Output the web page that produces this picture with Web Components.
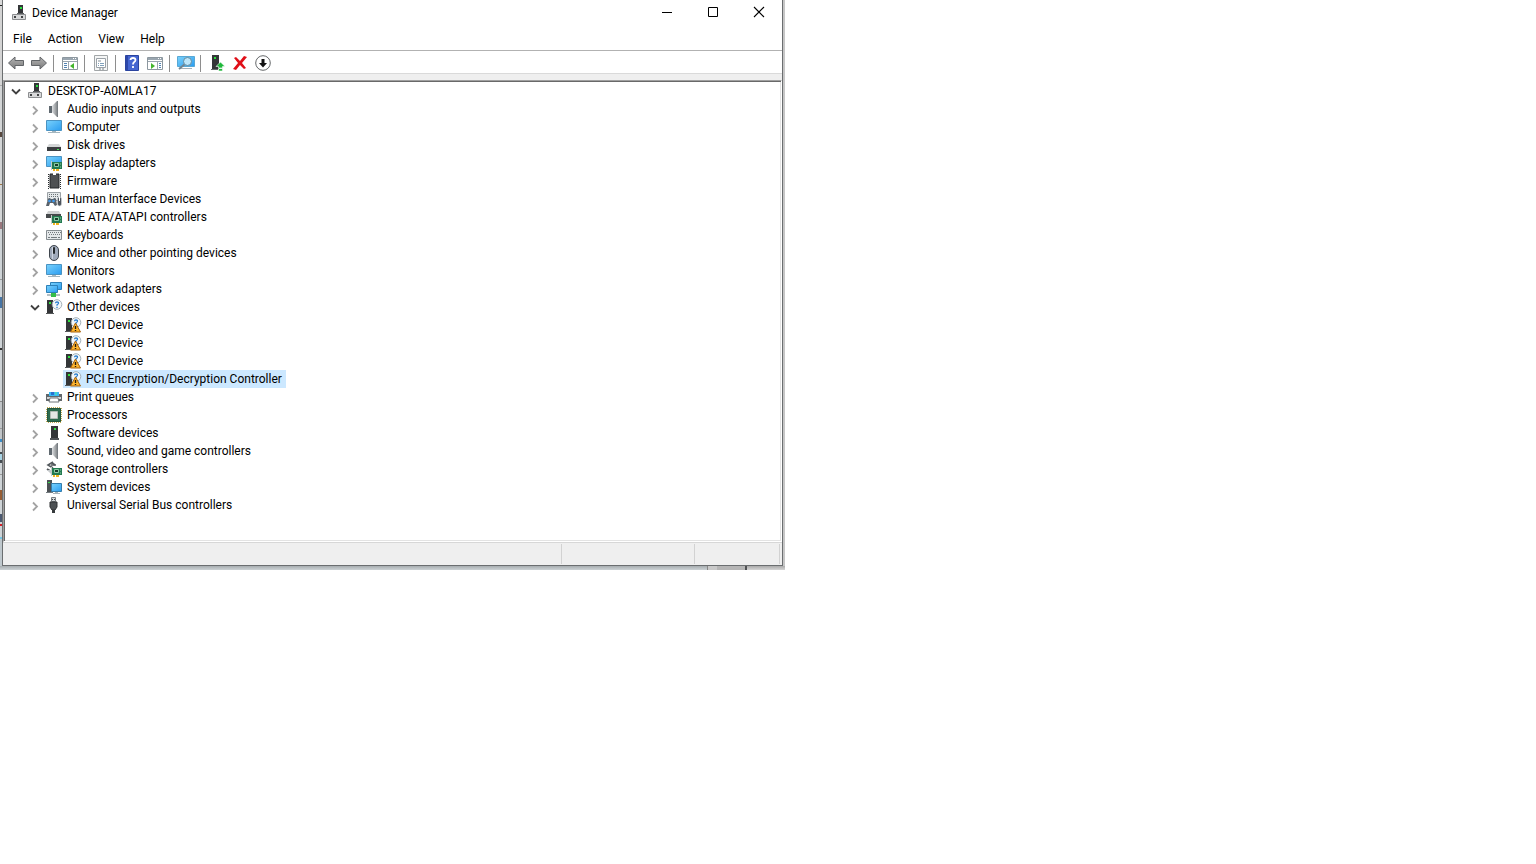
<!DOCTYPE html>
<html lang="en">
<head>
<meta charset="utf-8">
<title>Device Manager</title>
<style>
body { margin: 0; background: #fff; font: 12px/18px Roboto, "Open Sans", sans-serif; color: #000; }
</style>
</head>
<body>
<dm-desktop>
  <dm-window heading="Device Manager">
    <dm-menubar slot="bars"></dm-menubar>
    <dm-toolbar slot="bars"></dm-toolbar>
    <dm-tree>
      <dm-node icon="pc" label="DESKTOP-A0MLA17" open>
        <dm-node icon="speaker" label="Audio inputs and outputs" closed></dm-node>
        <dm-node icon="monitor" label="Computer" closed></dm-node>
        <dm-node icon="disk" label="Disk drives" closed></dm-node>
        <dm-node icon="display" label="Display adapters" closed></dm-node>
        <dm-node icon="firmware" label="Firmware" closed></dm-node>
        <dm-node icon="hid" label="Human Interface Devices" closed></dm-node>
        <dm-node icon="ide" label="IDE ATA/ATAPI controllers" closed></dm-node>
        <dm-node icon="keyboard" label="Keyboards" closed></dm-node>
        <dm-node icon="mouse" label="Mice and other pointing devices" closed></dm-node>
        <dm-node icon="monitor" label="Monitors" closed></dm-node>
        <dm-node icon="network" label="Network adapters" closed></dm-node>
        <dm-node icon="other" label="Other devices" open>
          <dm-node icon="unknown" label="PCI Device"></dm-node>
          <dm-node icon="unknown" label="PCI Device"></dm-node>
          <dm-node icon="unknown" label="PCI Device"></dm-node>
          <dm-node icon="unknown" label="PCI Encryption/Decryption Controller" selected></dm-node>
        </dm-node>
        <dm-node icon="printer" label="Print queues" closed></dm-node>
        <dm-node icon="cpu" label="Processors" closed></dm-node>
        <dm-node icon="tower" label="Software devices" closed></dm-node>
        <dm-node icon="speaker" label="Sound, video and game controllers" closed></dm-node>
        <dm-node icon="storage" label="Storage controllers" closed></dm-node>
        <dm-node icon="system" label="System devices" closed></dm-node>
        <dm-node icon="usb" label="Universal Serial Bus controllers" closed></dm-node>
      </dm-node>
    </dm-tree>
    <dm-statusbar slot="status"></dm-statusbar>
  </dm-window>
</dm-desktop>

<script>
const screenGradient = '<defs><linearGradient id="s" x1="0" y1="0" x2="1" y2="1"><stop offset="0" stop-color="#7ad2fc"/><stop offset="1" stop-color="#2a9cf0"/></linearGradient></defs>';
const metalGradient = '<defs><linearGradient id="m"><stop offset="0" stop-color="#dfe1e3"/><stop offset="1" stop-color="#85898c"/></linearGradient></defs>';
const arrowGradient = '<defs><linearGradient id="a" x1="0" y1="0" x2="0" y2="1"><stop offset="0" stop-color="#b5b5b5"/><stop offset="1" stop-color="#7b7b7b"/></linearGradient></defs>';
const card = '<path d="M6 7h10v7H6z" fill="#237a50"/><path d="M5.500 6v9" stroke="#c4cbc7"/><path d="M8.500 8.500h4v3h-4z" fill="#183d2b" stroke="#8cc9a5"/><path d="M14 9h1M14 12h1" stroke="#8cc9a5"/><path d="M7 14h2v2H7zM10 14h3v2h-3z" fill="#f0b41e"/>';
const tower = '<path d="M1 1h6v13H1z" fill="#343638"/><path d="M0 14h8v1H0z" fill="#55585a"/><path d="M3 3h2v2H3z" fill="#31e33f"/>';
const question = '<circle cx="11" cy="5.500" r="4.800" fill="#f4f7f9" stroke="#9ba8b1" stroke-width=".9"/><path d="M9.500 4.300q.1-1.500 1.500-1.500 1.600.1 1.500 1.500-.1.800-1.500 1.500v1M11 7.800v1.200" fill="none" stroke="#2178cd" stroke-width="1.200"/>';
const pcBoard = '<path d="M1.500 9.500h13v5h-13z" fill="#d8d9da" stroke="#8c8e90"/><path d="M3 11h2v2H3zM10 11h2v2h-2z" fill="#414345"/><path d="M7 0h5v9H7z" fill="#343638"/><path d="M6 8h7v1H6z" fill="#5b5d60"/><path d="M9 2h2v2H9z" fill="#29df3e"/>';
const icons = {
  pc: pcBoard,
  speaker: metalGradient + '<path d="M3 5h3v7H3z" fill="#606970"/><path d="M6 5l5-5v16l-5-5z" fill="url(#m)"/><path d="M11 0h1v16h-1z" fill="#777d82"/>',
  monitor: screenGradient + '<path d="M.5 1.500h15v10H.5z" fill="url(#s)" stroke="#4a93c2"/><path d="M6 12h4v1h4v1H2v-1h4z" fill="#a4b6bf"/>',
  disk: '<path d="M3 7h10l2 3H1z" fill="#d4d6d7"/><path d="M1 10h14v4H1z" fill="#3b3e41"/><path d="M11 12h2v1h-2z" fill="#44df55"/>',
  display: screenGradient + '<path d="M.5 1.500h15v10H.5z" fill="url(#s)" stroke="#4a93c2"/>' + card,
  firmware: '<path d="M4 1h9v14H4z" fill="#4e5153" stroke="#25282a"/><path d="M2.500 1v15M14.500 1v15" stroke="#292c2e" stroke-dasharray="1 1"/><path d="M7 0h3v2H7z" fill="#fff"/>',
  hid: '<path d="M1.500 1.500h13v8h-13z" fill="#e4e8ea" stroke="#9ba1a5"/><path d="M3 3.500h10M3 5.500h10" stroke="#6b7175" stroke-dasharray="1 1"/><path d="M2 8q1-2 3 0h2q2-2 3 0l1 6-2 1-2-3H4l-1 3H0z" fill="#59626b"/><circle cx="3.500" cy="10" r="1.300" fill="#3c99ee"/><circle cx="7.500" cy="10" r="1.300" fill="#3c99ee"/><rect x="11.500" y="6" width="4" height="9" rx="2" fill="#4b525b" stroke="#d3d7da" stroke-width=".6"/><path d="M13.500 6v4" stroke="#fff"/>',
  ide: '<path d="M2 2h11l2 4H0z" fill="#cfd1d2"/><path d="M0 5h15v4H0z" fill="#45494b"/>' + card,
  keyboard: '<path d="M.5 3.500h15v9H.5z" fill="#e5e8ea" stroke="#868d91"/><path d="M2 5.500h13M3 7.500h12" stroke="#737a7e" stroke-dasharray="1 1"/><path d="M2 10.500h2m1 0h6m1 0h2" stroke="#737a7e"/>',
  mouse: '<rect x="3.500" y=".5" width="9" height="15" rx="4.500" fill="#a0aabb" stroke="#3f454d"/><path d="M6 2h1v12H6z" fill="#cdd4df"/><rect x="7" y="2" width="2" height="7" rx="1" fill="#24282c"/>',
  network: screenGradient + '<path d="M4.500 1.500h11v7h-11z" fill="url(#s)" stroke="#2d80b8"/><path d="M.5 4.500h11v7H.5z" fill="url(#s)" stroke="#2d80b8"/><path d="M5 12h4v1h5v2H1v-2h4z" fill="#b4bfc3"/><path d="M5 12h5v4H5z" fill="#35bd4a"/>',
  other: tower + question,
  unknown: tower + question + '<path d="M10.500 6L15.500 15H5.500z" fill="#ffb52c" stroke="#a5610f" stroke-linejoin="round"/><path d="M10.500 9v3M10.500 13v1" stroke="#231b10" stroke-width="1.400"/>',
  printer: '<path d="M3 3h10v4H3z" fill="#39b8f3"/><path d="M5 3h3v3H5z" fill="#2a70cf"/><path d="M9 3h2v3H9z" fill="#48d6c6"/><path d="M0 5h3v2h10V5h3v7H0z" fill="#62676b"/><path d="M1 8h14v2H1z" fill="#d3d6d8"/><path d="M4 9h8l1 4H3z" fill="#fff" stroke="#71777a"/>',
  cpu: '<path d="M1 1h14v14H1z" fill="none" stroke="#c5ac55" stroke-width="2" stroke-dasharray="1 1"/><path d="M1.500 1.500h13v13h-13z" fill="#2c6b4e" stroke="#235640"/><path d="M4.500 4.500h7v7h-7z" fill="#e4e7e5" stroke="#b1bbb5"/>',
  tower: '<path d="M5 1h7v12H5z" fill="#333638"/><path d="M4 13h9v2H4z" fill="#505457"/><path d="M8 3h2v2H8z" fill="#30dd43"/>',
  storage: '<path d="M7 1L2 4l5 3M5 4h5" fill="none" stroke="#53585c" stroke-width="1.600"/><path d="M6 2l3 2M1 8l5 3" stroke="#53585c" stroke-width="2"/><path d="M1 9l4 4h2V9z" fill="#c6cacc"/>' + card,
  system: screenGradient + '<path d="M1 1h5v12H1z" fill="#4c5154"/><path d="M2 3h2v1H2z" fill="#38dc4c"/><path d="M0 13h7v1H0z" fill="#767d81"/><path d="M5.500 4.500h10v8h-10z" fill="url(#s)" stroke="#357dab"/><path d="M9 13h3v1h2v1H7v-1h2z" fill="#a8b3b9"/>',
  usb: '<path d="M5.500.5h4v4h-4z" fill="#d4d7d9" stroke="#777c80"/><path d="M6 2h1v1H6zM8 2h1v1H8z" fill="#424649"/><path d="M4 5h7v5l-2 3H6l-2-3z" fill="#4d5154" stroke="#303335"/><path d="M6 13h3v3H6z" fill="#363a3c"/>',
  back: arrowGradient + '<path d="M.5 8L7 2v3.500h8.500v5H7V14z" fill="url(#a)" stroke="#626568"/>',
  forward: arrowGradient + '<path d="M15.500 8L9 2v3.500H.5v5H9V14z" fill="url(#a)" stroke="#626568"/>',
  hidetree: '<path d="M.5 2.500h15v12H.5z" fill="#fff" stroke="#8c979f"/><path d="M1 3h14v2H1z" fill="#9aa6b0"/><path d="M11 3.500h1m1 0h1" stroke="#fff"/><path d="M1 6.500h14M6.500 7v7" stroke="#9ba6b0"/><path d="M2 8.500h3M2 10.500h3M2 12.500h3" stroke="#5283b3"/><path d="M12 8v6l-4-3z" fill="#43b52d"/>',
  props: '<path d="M1.500.5h13v15h-13z" fill="#f5f6f6" stroke="#a2a6a8"/><path d="M3.500 3.500h9v9h-9z" fill="#fff" stroke="#9ba2a8"/><path d="M5 5h3v2H5z" fill="#c0c6cb"/><path d="M5 8.500h1m1 0h4M5 10.500h1m1 0h4" stroke="#7fa1bb"/><path d="M6 14h2m1 0h2" stroke="#778188"/>',
  help: '<path d="M1.500.5h13v15h-13z" fill="#4566d1" stroke="#2b449f"/><path d="M2 1h2v14H2z" fill="#2d48aa"/><path d="M6.500 5q0-2 2.500-2t2.500 2q0 1.200-1.500 2.200Q9 8 9 9.500M9 11v2" fill="none" stroke="#fff" stroke-width="1.800"/>',
  actionpane: '<path d="M.5 2.500h15v12H.5z" fill="#fff" stroke="#8c979f"/><path d="M1 3h14v2H1z" fill="#9aa6b0"/><path d="M11 3.500h1m1 0h1" stroke="#fff"/><path d="M1 6.500h14M10.500 7v7" stroke="#9ba6b0"/><path d="M12 8.500h2M12 10.500h2M12 12.500h2" stroke="#5283b3"/><path d="M4 8v6l4-3z" fill="#43b52d"/>',
  scan: screenGradient + '<path d="M-.5 1.500h17v10h-17z" fill="url(#s)" stroke="#59a8d4"/><path d="M2 13h12v1H2z" fill="#a8b2b8"/><path d="M7 9l-6 5" stroke="#718591" stroke-width="2"/><circle cx="9.500" cy="6.500" r="4" fill="#bce6fa" stroke="#668b9d"/>',
  update: '<path d="M3 0h7v14H3z" fill="#343638"/><path d="M2 14h7v1H2z" fill="#65696b"/><path d="M5 2h2v2H5z" fill="#2fdf41"/><path d="M11.500 7l4.500 4.500h-2.500V13h-4v-1.500H7zM9.500 13.500h4V16h-4z" fill="#20b83b" stroke="#fff" stroke-width=".6"/>',
  remove: '<path d="M2 3l2-1 4 4 4-5 3 1-5 6 4 5-2 1-4-4-4 5-3-1 5-6z" fill="#e00f18"/>',
  disable: '<circle cx="8" cy="8" r="7.300" fill="#fff" stroke="#66696b"/><path d="M6.500 4h3v4H12l-4 4.500L4 8h2.500z" fill="#111"/>',
  minimize: '<path d="M3 8.500h10" stroke="#000"/>',
  maximize: '<path d="M3.500 3.500h9v9h-9z" fill="none" stroke="#000"/>',
  close: '<path d="M3 3l10 10M13 3L3 13" stroke="#000" stroke-width="1.100"/>',
  expanded: '<path d="M4 6.500l4 4 4-4" fill="none" stroke="#404040" stroke-width="1.800"/>',
  collapsed: '<path d="M6 5.500l4 4-4 4" fill="none" stroke="#a3a3a3" stroke-width="1.800"/>'
};

function define(name, render) {
  customElements.define(name, class extends HTMLElement {
    connectedCallback() {
      if (!this.shadowRoot) this.attachShadow({ mode: 'open' }).innerHTML = render(this);
    }
  });
}

define('dm-icon', el => `<style>
  :host { display: block; width: 16px; height: 16px; flex: none; }
  svg { display: block; width: 16px; height: 16px; overflow: visible; }
</style><svg viewBox="0 0 16 16" aria-hidden="true">${icons[el.getAttribute('name')]}</svg>`);

define('dm-desktop', () => `<style>
  :host { display: grid; grid-template-columns: 2px minmax(0, 1fr) 2px; width: calc(50% + 17px);
    background: linear-gradient(90deg, #c5cbce, #d0d2d4 60%, #c6c6c6); }
  .edge { background: linear-gradient(#dadada 5px, #222 5px 6px, #d4d4d4 6px 85px, #aaa 85px 86px,
    #d3d5d6 86px 132px, #58483e 132px 137px, #d3d5d6 137px 184px, #9b7546 184px 185px,
    #d3d5d6 185px 222px, #99777d 222px 229px, #ced3d6 229px 279px, #999 279px 280px,
    #ced3d6 280px 297px, #4775a5 297px 308px, #ced3d6 308px 348px, #333 348px 350px,
    #ced3d6 350px 401px, #888 401px 402px, #c0c4c7 402px 428px, #999 428px 429px,
    #c0c4c7 429px 439px, #3c8dc7 439px 442px, #d0d5d7 442px 452px, #464d52 452px 454px,
    #a8d3e4 454px 460px, #464d52 460px 463px, #ced3d6 463px 474px, #999 474px 475px,
    #ced3d6 475px 490px, #965d35 490px 500px, #ced3d6 500px 514px, #4b5971 514px 522px,
    #ced3d6 522px 524px, #d42129 524px 526px, #ced3d6 526px 537px, #75c6e3 537px 539px, #bfc8cd 539px); }
  .below { grid-column: 1 / -1; height: 4px; display: grid; grid-template-columns: 1fr 10px 28px 2px 38px;
    background: linear-gradient(#a7adb0, #ccd2d5); }
  .below i:nth-child(2) { border-left: 1px solid #888; background: #c9c9c9; }
  .below i:nth-child(3) { background: #b5b5b5; }
  .below i:nth-child(4) { background: #505254; }
  .below i:nth-child(5) { background: linear-gradient(#aaa, #d5d5d5); }
</style><div class="edge"></div><slot></slot><div></div><div class="below"><i></i><i></i><i></i><i></i><i></i></div>`);

define('dm-window', el => `<style>
  :host { display: block; min-width: 0; border: solid #6b6e70; border-width: 0 1px 1px; background: #efefef; }
  header { display: flex; align-items: center; height: 26px; padding-left: 8px; background: #fff; }
  h1 { flex: 1; margin: 0 0 0 5px; font: inherit; }
  button { display: grid; place-items: center; width: 46px; height: 24px; padding: 0; border: 0; background: none; align-self: flex-start; }
  main { padding-top: 6px; }
</style>
<header><dm-icon name="pc"></dm-icon><h1>${el.getAttribute('heading')}</h1>
<button aria-label="Minimize"><dm-icon name="minimize"></dm-icon></button>
<button aria-label="Maximize"><dm-icon name="maximize"></dm-icon></button>
<button aria-label="Close"><dm-icon name="close"></dm-icon></button></header>
<slot name="bars"></slot><main><slot></slot></main><slot name="status"></slot>`);

define('dm-menubar', () => `<style>
  :host { display: flex; height: 22px; padding: 2px 0 0 2px; background: #fff; border-bottom: 1px solid #b2b2b2; }
  button { padding: 0 8px; border: 0; background: none; font: inherit; color: inherit; }
</style><button>File</button><button>Action</button><button>View</button><button>Help</button>`);

const tools = [['back', 'Back'], ['forward', 'Forward'], 0, ['hidetree', 'Show/Hide Console Tree'], 0, ['props', 'Properties'], 0,
  ['help', 'Help'], ['actionpane', 'Show/Hide Action Pane'], 0, ['scan', 'Scan for hardware changes'], 0,
  ['update', 'Update driver'], ['remove', 'Uninstall device'], ['disable', 'Disable device']];
define('dm-toolbar', () => `<style>
  :host { display: flex; align-items: center; height: 22px; padding: 0 0 0 1px; background: #fff; border-bottom: 1px solid #dadada; }
  button { display: grid; place-items: center; width: 23px; height: 22px; padding: 2px 0 0; border: 0; background: none; }
  i { width: 1px; height: 17px; margin: 2px 4px 0 3px; background: #8e8e8e; }
</style>${tools.map(t => t ? `<button aria-label="${t[1]}"><dm-icon name="${t[0]}"></dm-icon></button>` : '<i></i>').join('')}`);

define('dm-tree', () => `<style>
  :host { display: block; padding: 1px 0 27px 4px; background: #fff; border: 1px solid;
    border-color: #a0a0a0 #fff #fff #a0a0a0; box-shadow: inset 1px 1px #696969, inset -1px -1px #e3e3e3; }
</style><div role="tree"><slot></slot></div>`);

define('dm-node', el => {
  const open = el.hasAttribute('open'), parent = open || el.hasAttribute('closed');
  return `<style>
  :host { display: block; }
  .row { display: flex; height: 18px; align-items: center; }
  .toggle { width: 16px; height: 16px; padding: 0; border: 0; background: none; flex: none; }
  .item { display: flex; align-items: center; gap: 5px; height: 18px; margin-left: 1px; padding: 0 4px 0 2px; white-space: nowrap; }
  .selected { background: #cce8ff; }
  .children { padding-left: 19px; }
</style><div role="treeitem" aria-selected="${el.hasAttribute('selected')}"${parent ? ` aria-expanded="${open}"` : ''}>
<div class="row">${parent ? `<button class="toggle" aria-label="${open ? 'Collapse' : 'Expand'}"><dm-icon name="${open ? 'expanded' : 'collapsed'}"></dm-icon></button>` : '<span class="toggle"></span>'}
<span class="item${el.hasAttribute('selected') ? ' selected' : ''}"><dm-icon name="${el.getAttribute('icon')}"></dm-icon><span>${el.getAttribute('label')}</span></span></div>
${open ? '<div role="group" class="children"><slot></slot></div>' : ''}</div>`;
});

define('dm-statusbar', () => `<style>
  :host { display: grid; grid-template-columns: 1fr 133px 85px; height: 20px; padding: 1px 2px 1px 0; border-top: 1px solid #d7d7d7; background: #efefef; }
  span { border-right: 1px solid #d2d2d2; }
</style><span></span><span></span><span></span>`);
</script>
</body>
</html>
